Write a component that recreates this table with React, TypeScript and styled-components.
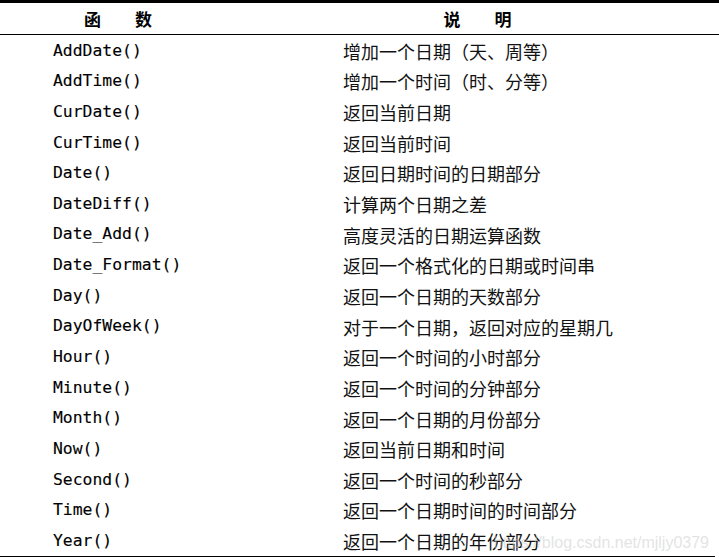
import React from "react";
import styled, { createGlobalStyle } from "styled-components";

const Global = createGlobalStyle`
  html, body { margin: 0; padding: 0; background: #fff; }
  body { width: 719px; height: 557px; overflow: hidden; }
`;

const rows: [string, string][] = [
  ["AddDate()", "增加一个日期（天、周等）"],
  ["AddTime()", "增加一个时间（时、分等）"],
  ["CurDate()", "返回当前日期"],
  ["CurTime()", "返回当前时间"],
  ["Date()", "返回日期时间的日期部分"],
  ["DateDiff()", "计算两个日期之差"],
  ["Date_Add()", "高度灵活的日期运算函数"],
  ["Date_Format()", "返回一个格式化的日期或时间串"],
  ["Day()", "返回一个日期的天数部分"],
  ["DayOfWeek()", "对于一个日期，返回对应的星期几"],
  ["Hour()", "返回一个时间的小时部分"],
  ["Minute()", "返回一个时间的分钟部分"],
  ["Month()", "返回一个日期的月份部分"],
  ["Now()", "返回当前日期和时间"],
  ["Second()", "返回一个时间的秒部分"],
  ["Time()", "返回一个日期时间的时间部分"],
  ["Year()", "返回一个日期的年份部分"],
];

const Table = styled.div`
  position: relative;
  width: 719px;
  border-top: 3px solid #000;
`;

const HeaderRow = styled.div`
  display: grid;
  grid-template-columns: 236px 1fr;
  height: 31px;
  align-items: center;
  border-bottom: 1.5px solid #000;
`;

const HeadCell = styled.div`
  text-align: center;
  font-family: "Noto Sans CJK SC", sans-serif;
  font-weight: 700;
  font-size: 17px;
  color: #000;
  white-space: pre;
  line-height: 1;
`;

const Body = styled.div`
  display: grid;
  grid-auto-rows: 30.65px;
  padding-top: 0.5px;
  border-bottom: 1.5px solid #000;
  width: 715px;
`;

const Row = styled.div`
  display: grid;
  grid-template-columns: 343px 1fr;
  align-items: center;
`;

const FnCell = styled.div`
  padding-left: 53px;
  font-family: "DejaVu Sans Mono", monospace;
  font-size: 16.4px;
  color: #000;
  -webkit-text-stroke: 0.12px #000;
  line-height: 1;
`;

const DescCell = styled.div`
  font-family: "Noto Sans CJK SC", sans-serif;
  font-size: 18px;
  color: #111;
  line-height: 1;
  position: relative;
  z-index: 1;
`;

const Watermark = styled.div`
  position: absolute;
  right: 10px;
  bottom: 5px;
  font-family: "Liberation Sans", Arial, sans-serif;
  font-size: 16px;
  color: rgba(200, 200, 200, 0.5);
  z-index: 2;
  white-space: nowrap;
`;

export default function App() {
  return (
    <>
      <Global />
      <Table>
        <HeaderRow>
          <HeadCell>{"函\u3000\u3000数"}</HeadCell>
          <HeadCell>{"说\u3000\u3000明"}</HeadCell>
        </HeaderRow>
        <Body>
          {rows.map(([f, d]) => (
            <Row key={f}>
              <FnCell>{f}</FnCell>
              <DescCell>{d}</DescCell>
            </Row>
          ))}
        </Body>
        <Watermark>https://blog.csdn.net/mjljy0379</Watermark>
      </Table>
    </>
  );
}
